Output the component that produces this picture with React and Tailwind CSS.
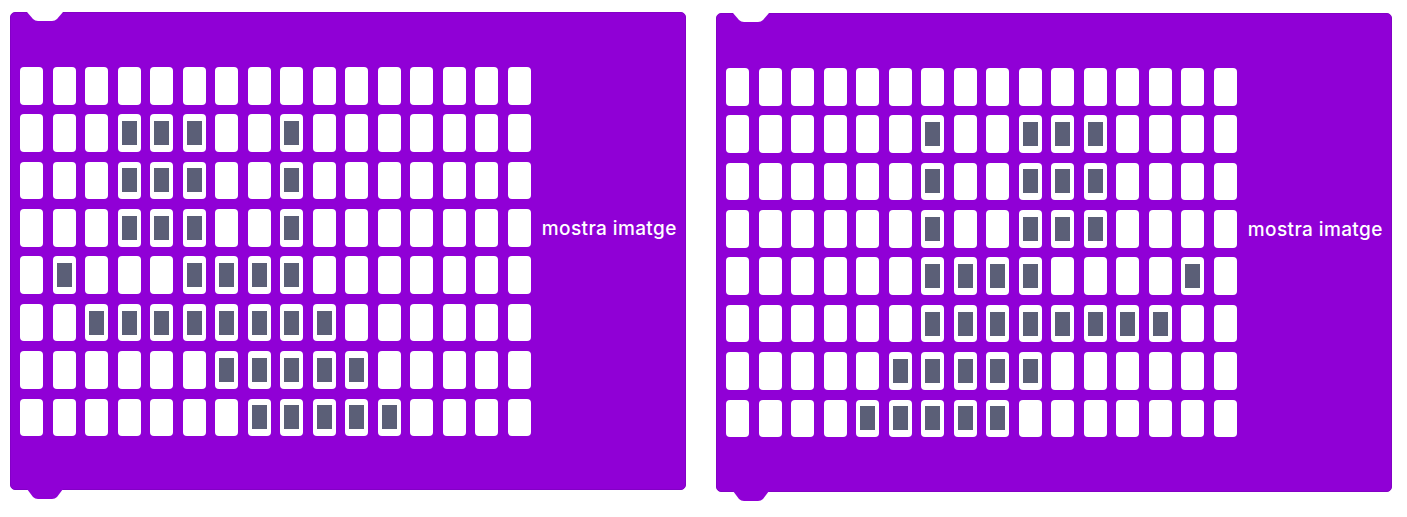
const range = (a, b) => Array.from({ length: b - a + 1 }, (_, i) => a + i)

const LEFT = [
  [],
  [4, 5, 6, 9],
  [4, 5, 6, 9],
  [4, 5, 6, 9],
  [2, 6, 7, 8, 9],
  range(3, 10),
  range(7, 11),
  range(8, 12),
]

const RIGHT = [
  [],
  [7, 10, 11, 12],
  [7, 10, 11, 12],
  [7, 10, 11, 12],
  [7, 8, 9, 10, 15],
  range(7, 14),
  range(6, 10),
  range(5, 9),
]

function Cell({ on }) {
  return (
    <div className="h-[37.5px] w-[23px] rounded-[4px] bg-white flex items-center justify-center">
      {on && <div className="w-[15px] h-[24px] bg-[#5b5f77]" />}
    </div>
  )
}

function Board({ rows, className = '' }) {
  return (
    <div className={`relative w-[676px] bg-[#9000d6] rounded-[5px] border border-[#8300c6] flex items-start pt-[54px] pl-[9px] ${className}`}>
      {/* notch on top */}
      <svg className="absolute left-[16px] -top-[1px]" width="36" height="9" viewBox="0 0 36 9">
        <path d="M0 0 L6 7 Q8 9 11 9 L25 9 Q28 9 30 7 L36 0 Z" fill="#ffffff" />
      </svg>
      {/* tab underneath */}
      <svg className="absolute left-[16px] -bottom-[10px]" width="36" height="10" viewBox="0 0 36 10">
        <path d="M0 0 L6 8 Q8 10 11 10 L25 10 Q28 10 30 8 L36 0 Z" fill="#9000d6" />
      </svg>

      <div className="grid grid-cols-[repeat(16,23px)] gap-x-[9.53px] gap-y-[9.86px]">
        {rows.map((on, r) =>
          range(1, 16).map(c => <Cell key={`${r}-${c}`} on={on.includes(c)} />)
        )}
      </div>

      <p className="ml-[11px] mt-[150px] leading-[24px] text-[19px] tracking-[0.4px] font-medium text-white font-['Inter',sans-serif] whitespace-nowrap">
        mostra imatge
      </p>
    </div>
  )
}

export default function App() {
  return (
    <div className="w-[1407px] h-[517px] bg-white flex items-start gap-[30px] pl-[10px] pt-[12px]">
      <Board rows={LEFT} className="h-[478px]" />
      <Board rows={RIGHT} className="h-[479px] mt-[1px]" />
    </div>
  )
}
